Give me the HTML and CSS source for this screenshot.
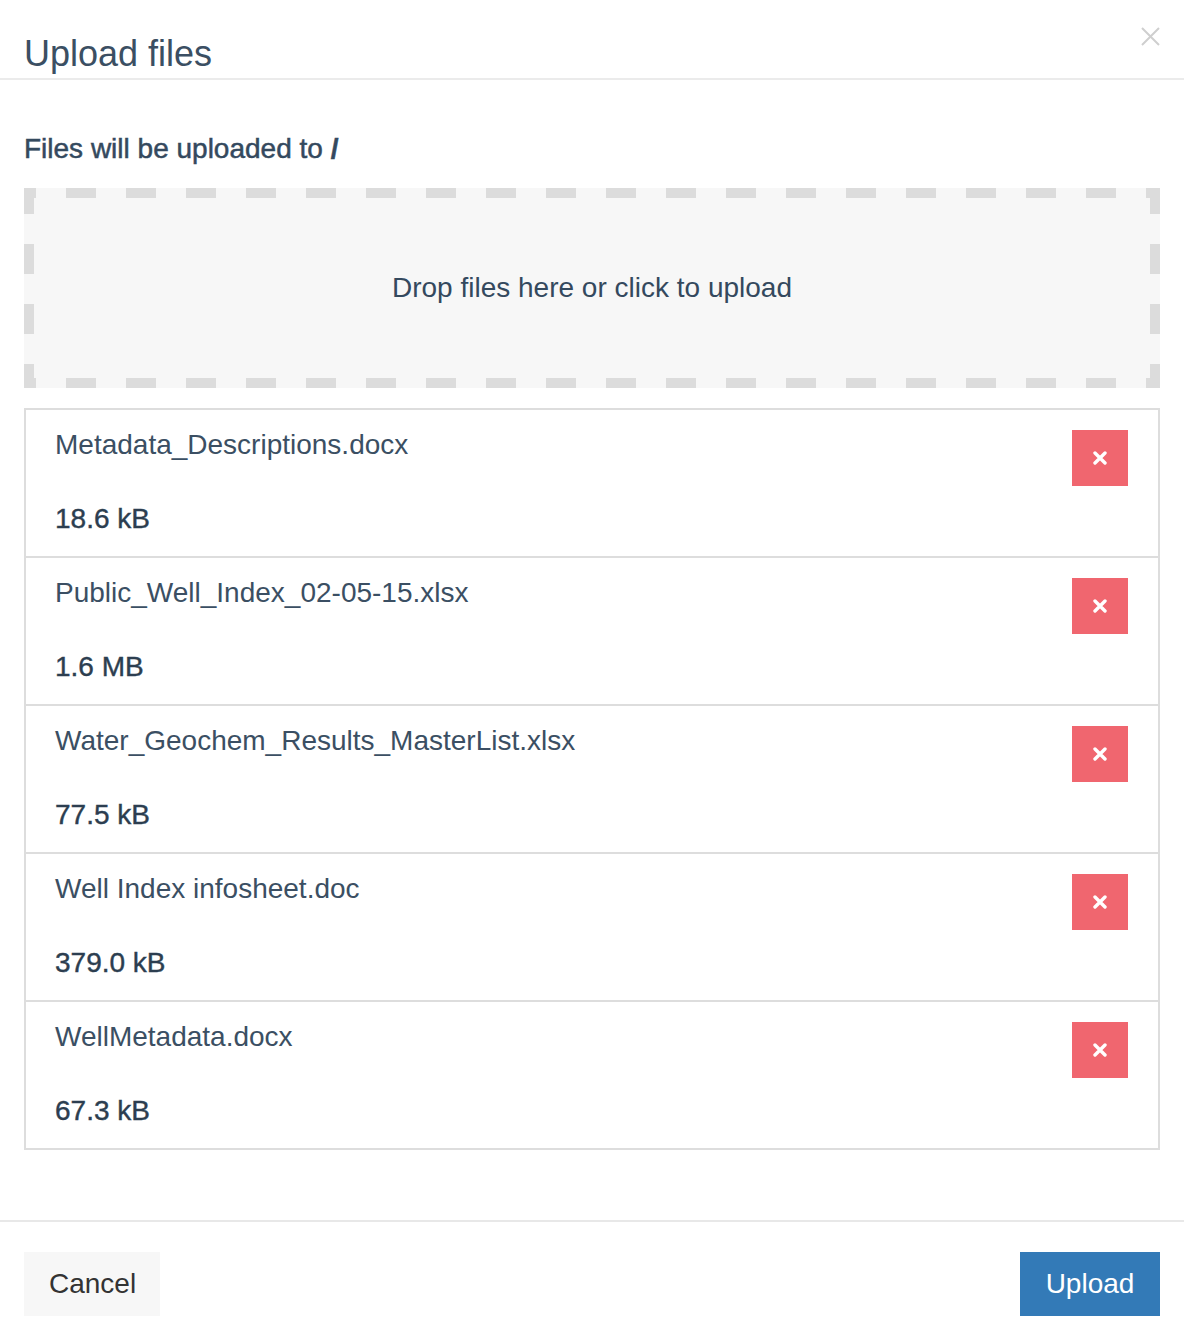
FILE: index.html
```html
<!DOCTYPE html>
<html lang="en">
<head>
<meta charset="utf-8">
<title>Upload files</title>
<link rel="stylesheet" href="styles.css">
</head>
<body>
<div class="modal">
  <header class="modal-header">
    <h1 class="modal-title">Upload files</h1>
    <button class="close" aria-label="Close">
      <svg width="19" height="19" viewBox="0 0 19 19"><path d="M1 1L18 18M18 1L1 18" stroke="#cfcfcf" stroke-width="2" fill="none"/></svg>
    </button>
  </header>
  <main class="modal-body">
    <p class="target">Files will be uploaded to <strong>/</strong></p>
    <div class="dropzone">Drop files here or click to upload</div>
    <ul class="file-list">
      <li class="file">
        <div class="file-info"><span class="file-name">Metadata_Descriptions.docx</span><span class="file-size">18.6 kB</span></div>
        <button class="remove" aria-label="Remove"><svg width="14" height="14" viewBox="0 0 14 14"><path d="M2 2L12 12M12 2L2 12" stroke="#fff" stroke-width="3.4" stroke-linecap="round"/></svg></button>
      </li>
      <li class="file">
        <div class="file-info"><span class="file-name">Public_Well_Index_02-05-15.xlsx</span><span class="file-size">1.6 MB</span></div>
        <button class="remove" aria-label="Remove"><svg width="14" height="14" viewBox="0 0 14 14"><path d="M2 2L12 12M12 2L2 12" stroke="#fff" stroke-width="3.4" stroke-linecap="round"/></svg></button>
      </li>
      <li class="file">
        <div class="file-info"><span class="file-name">Water_Geochem_Results_MasterList.xlsx</span><span class="file-size">77.5 kB</span></div>
        <button class="remove" aria-label="Remove"><svg width="14" height="14" viewBox="0 0 14 14"><path d="M2 2L12 12M12 2L2 12" stroke="#fff" stroke-width="3.4" stroke-linecap="round"/></svg></button>
      </li>
      <li class="file">
        <div class="file-info"><span class="file-name">Well Index infosheet.doc</span><span class="file-size">379.0 kB</span></div>
        <button class="remove" aria-label="Remove"><svg width="14" height="14" viewBox="0 0 14 14"><path d="M2 2L12 12M12 2L2 12" stroke="#fff" stroke-width="3.4" stroke-linecap="round"/></svg></button>
      </li>
      <li class="file">
        <div class="file-info"><span class="file-name">WellMetadata.docx</span><span class="file-size">67.3 kB</span></div>
        <button class="remove" aria-label="Remove"><svg width="14" height="14" viewBox="0 0 14 14"><path d="M2 2L12 12M12 2L2 12" stroke="#fff" stroke-width="3.4" stroke-linecap="round"/></svg></button>
      </li>
    </ul>
  </main>
  <footer class="modal-footer">
    <button class="btn btn-cancel">Cancel</button>
    <button class="btn btn-upload">Upload</button>
  </footer>
</div>
</body>
</html>
```
FILE: styles.css
```css
* { box-sizing: border-box; }
html, body { margin: 0; padding: 0; background: #fff; }
body {
  font-family: "Liberation Sans", Helvetica, Arial, sans-serif;
  font-size: 28px;
  color: #34495e;
}
button { font-family: inherit; cursor: pointer; }

.modal-header {
  display: flex;
  justify-content: space-between;
  padding: 34px 24px 4px;
  border-bottom: 2px solid #ebebeb;
}
.modal-title {
  margin: 0;
  font-size: 36px;
  font-weight: normal;
  line-height: 40px;
  color: #3b4f63;
}
.close {
  align-self: flex-start;
  margin-top: -7px;
  padding: 0;
  border: 0;
  background: none;
  width: 19px;
  height: 19px;
  line-height: 0;
}

.modal-body {
  padding: 49px 24px 70px;
}
.target {
  margin: 0 0 19px;
  line-height: 40px;
  color: #34495e;
  -webkit-text-stroke: 0.5px #34495e;
}
.target strong { font-weight: bold; }

.dropzone {
  height: 200px;
  margin-bottom: 20px;
  display: flex;
  align-items: center;
  justify-content: center;
  color: #34495e;
  background-color: #f7f7f7;
  background-image:
    linear-gradient(90deg, #dcdcdc 30px, transparent 30px),
    linear-gradient(90deg, #dcdcdc 30px, transparent 30px),
    linear-gradient(180deg, #dcdcdc 30px, transparent 30px),
    linear-gradient(180deg, #dcdcdc 30px, transparent 30px);
  background-size: 60px 10px, 60px 10px, 10px 60px, 10px 60px;
  background-position: 42px 0, 42px 100%, 0 56px, 100% 56px;
  background-repeat: repeat-x, repeat-x, repeat-y, repeat-y;
}

.file-list {
  list-style: none;
  margin: 0;
  padding: 0;
  border: 2px solid #dddddd;
}
.file {
  display: flex;
  justify-content: space-between;
  align-items: flex-start;
  height: 148px;
  padding: 19px 30px 0 29px;
  border-bottom: 2px solid #dddddd;
}
.file:last-child { height: 146px; border-bottom: 0; }
.file-info {
  display: flex;
  flex-direction: column;
  gap: 42px;
}
.file-name {
  line-height: 32px;
  color: #3b4f63;
}
.file-size {
  line-height: 32px;
  color: #2c3e50;
  -webkit-text-stroke: 0.4px #2c3e50;
}
.remove {
  margin-top: 1px;
  width: 56px;
  height: 56px;
  padding: 0;
  border: 0;
  background: #f0666f;
  display: flex;
  align-items: center;
  justify-content: center;
}

.modal-footer {
  display: flex;
  justify-content: space-between;
  padding: 30px 24px 18px;
  border-top: 2px solid #e8e8e8;
}
.btn {
  height: 64px;
  line-height: 64px;
  font-size: 28px;
  border: 0;
  padding: 0 25px;
}
.btn-cancel {
  background: #f7f7f7;
  color: #333;
  width: 136px;
}
.btn-upload {
  background: #337ab7;
  color: #fff;
  width: 140px;
}
```
